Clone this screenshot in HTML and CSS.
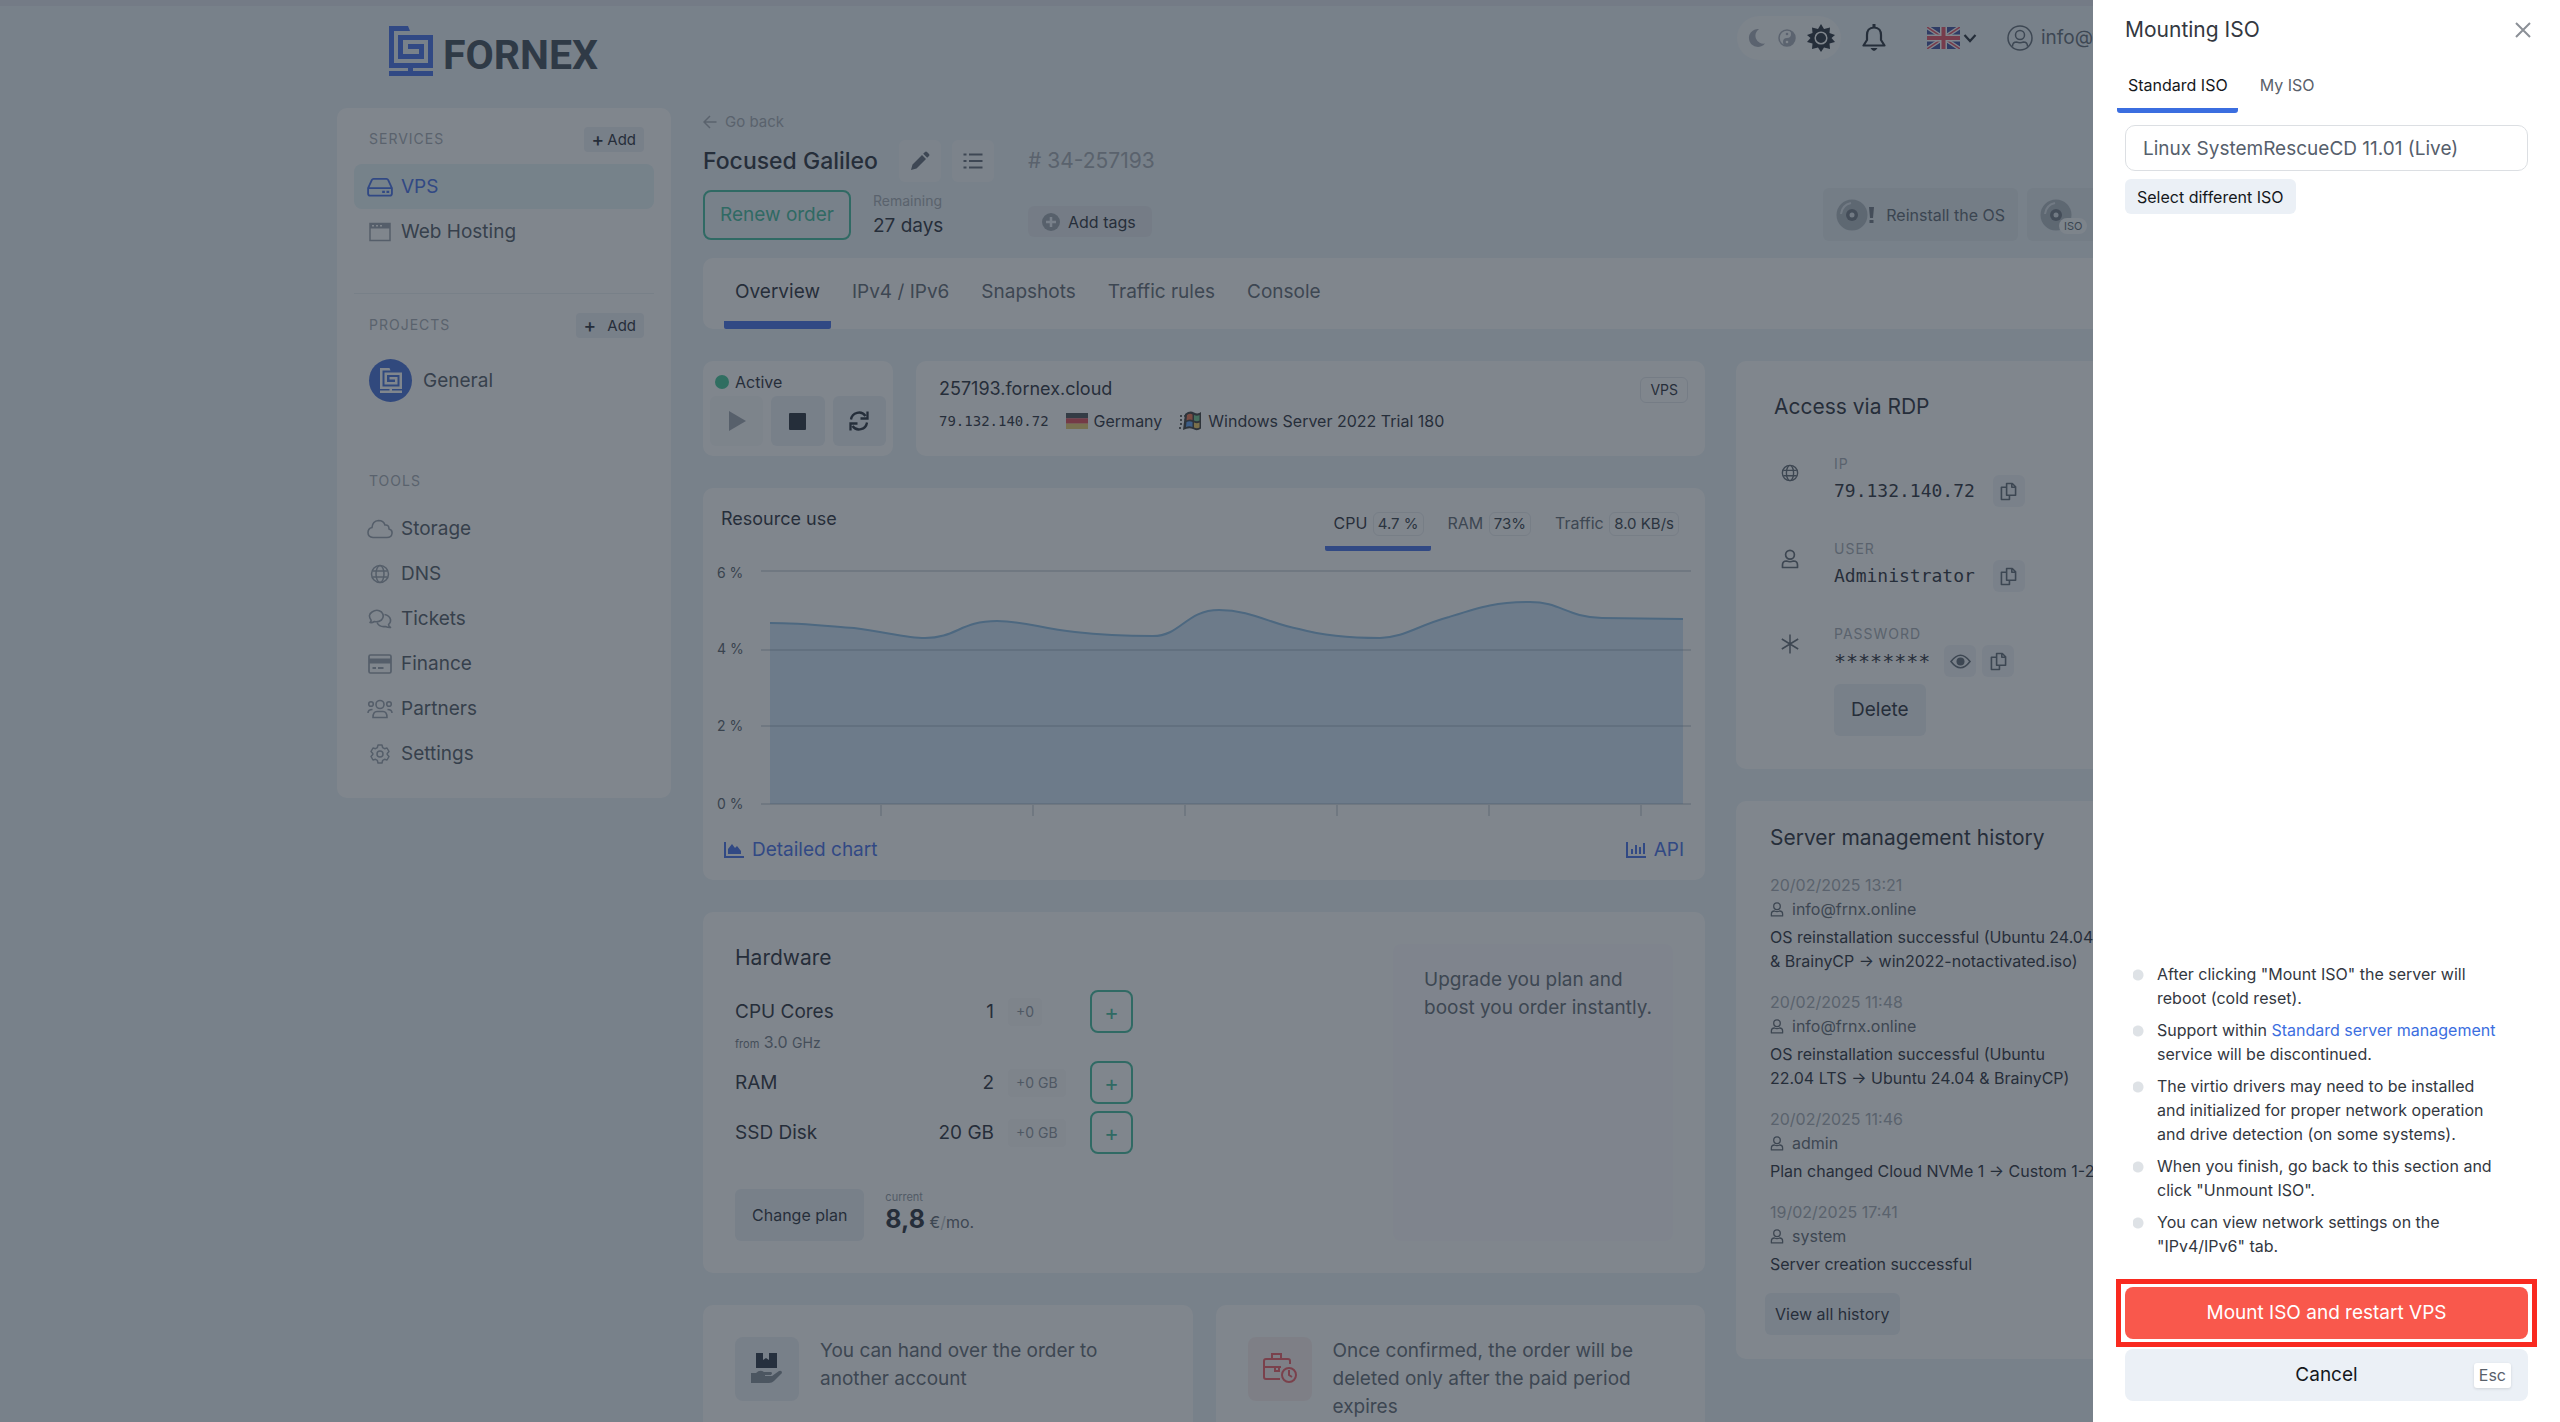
FILE: index.html
```
<!DOCTYPE html>
<html lang="en">
<head>
	<meta charset="UTF-8">
	<meta name="viewport" content="width=device-width, initial-scale=1.0">
	<title>Focused Galileo - FORNEX</title>
	<link rel="stylesheet" href="styles.css">
</head>
<body>
	<!-- icons used more than once -->
	<svg class="sprite" aria-hidden="true">
		<symbol id="i-mark" viewBox="0 0 44 50">
			<path fill="currentColor" fill-rule="evenodd" d="M0 0H19L21 5H5V37H39V14H14V28H30V23H19V18H35V33H9V9H44V42H24V45H44V50H0V45H19V42H0Z"/>
		</symbol>
		<symbol id="i-globe" viewBox="0 0 20 20">
			<g fill="none" stroke="currentColor" stroke-width="1.5"><circle cx="10" cy="10" r="8.5"/><ellipse cx="10" cy="10" rx="4" ry="8.5"/><path d="M2.500 7H17.500M2.500 13H17.500"/></g>
		</symbol>
		<symbol id="i-user" viewBox="0 0 18 20">
			<g fill="none" stroke="currentColor" stroke-width="1.700"><circle cx="9" cy="5.700" r="4.400"/><path d="M1.500 18.500v-2.500q0-4 4-4q3.500 1.500 7 0q4 0 4 4v2.500z" stroke-linejoin="round"/></g>
		</symbol>
		<symbol id="i-copy" viewBox="0 0 18 20">
			<path fill="none" stroke="currentColor" stroke-width="1.700" stroke-linejoin="round" d="M7 1.500h6l3.500 3.500v9H7zM12.500 1.500V5.500h4M7 5.500H1.500v13h8.500V14"/>
		</symbol>
	</svg>

	<div class="topline"></div>
	<div class="page">
		<header class="header">
			<a class="logo" href="#"><svg class="logo-mark"><use href="#i-mark"/></svg><span>FORNEX</span></a>
			<div class="header-tools">
				<div class="theme">
					<button class="icon-btn" aria-label="Dark theme"><svg width="20" height="20" viewBox="0 0 20 20"><path fill="currentColor" d="M12 1A9 9 0 1 0 18 15.500A8 8 0 0 1 12 1Z"/></svg></button>
					<button class="icon-btn" aria-label="Auto theme"><svg width="20" height="20" viewBox="0 0 20 20"><circle cx="10" cy="10" r="8" fill="none" stroke="currentColor" stroke-width="1.500"/><path fill="currentColor" d="M10 2A8 8 0 0 1 10 18A4 4 0 0 1 10 10A4 4 0 0 0 10 2Z"/><circle cx="10" cy="14" r="1.300" fill="#fff"/><circle cx="10" cy="6" r="1.300" fill="currentColor"/></svg></button>
					<button class="icon-btn theme-on" aria-label="Light theme"><svg width="28" height="28" viewBox="0 0 28 28"><path fill="currentColor" d="M14 0L17 5L23 3.500L22.500 9L28 11L24.500 14L28 18L22.500 19.500L23 25L17 23.500L14 28L11 23.500L5 25L5.500 19.500L0 18L3.500 14L0 11L5.500 9L5 3.500L11 5Z"/><circle cx="14" cy="14" r="5.800" fill="none" stroke="#fff" stroke-width="1.500"/></svg></button>
				</div>
				<button class="icon-btn bell" aria-label="Notifications"><svg width="24" height="28" viewBox="0 0 24 28"><path fill="none" stroke="currentColor" stroke-width="2.200" stroke-linejoin="round" d="M12 3.500C7 3.500 5 7 5 11V16L1.500 21.500H22.500L19 16V11C19 7 17 3.500 12 3.500Z"/><path fill="currentColor" d="M10.500 0h3v4h-3zM8.500 24h7q-3.500 6-7 0z"/></svg></button>
				<button class="icon-btn lang" aria-label="Language">
					<svg width="33" height="22" viewBox="0 0 33 22"><path fill="#35489c" d="M0 0H33V22H0Z"/><path stroke="#fff" stroke-width="4" d="M0 0L33 22M33 0L0 22"/><path stroke="#e8485c" stroke-width="1.500" d="M0 0L33 22M33 0L0 22"/><path stroke="#fff" stroke-width="7" d="M16.500 0V22M0 11H33"/><path stroke="#e8485c" stroke-width="4" d="M16.500 0V22M0 11H33"/></svg>
					<svg width="14" height="10" viewBox="0 0 14 10"><path fill="none" stroke="currentColor" stroke-width="2.200" d="M1.500 2L7 8L12.500 2"/></svg>
				</button>
				<a class="account" href="#"><svg width="26" height="26" viewBox="0 0 26 26"><g fill="none" stroke="currentColor" stroke-width="1.500"><circle cx="13" cy="13" r="12"/><circle cx="13" cy="10" r="4.500"/><path d="M5.500 21.500q0-4.500 4-4.500q3.500 1.500 7 0q4 0 4 4.500"/></g></svg>info@f</a>
			</div>
		</header>

		<div class="layout">
			<nav class="sidebar card">
				<div class="side-head"><h3>SERVICES</h3><button class="btn-add"><b>+</b>Add</button></div>
				<a class="side-link active" href="#"><svg viewBox="0 0 24 18"><path fill="none" stroke="currentColor" stroke-width="1.700" stroke-linejoin="round" d="M1 10L4.500 2.500Q5 1.500 6 1.500H18Q19 1.500 19.500 2.500L23 10V15Q23 17 21 17H3Q1 17 1 15ZM1 10H23"/><path fill="currentColor" d="M14 12.500h2.500v2H14zM18 12.500h2.500v2H18z"/></svg>VPS</a>
				<a class="side-link" href="#"><svg viewBox="0 0 24 20"><path fill="none" stroke="currentColor" stroke-width="1.500" d="M2 1.500H22V18.500H2Z"/><path fill="currentColor" d="M2 1H22V6.500H2Z"/><path stroke="#fff" stroke-width="1.500" d="M4 3.700h2M8 3.700h2M12 3.700h2"/></svg>Web Hosting</a>
				<hr>
				<div class="side-head"><h3>PROJECTS</h3><button class="btn-add wide"><b>+</b>Add</button></div>
				<a class="side-link project" href="#"><span class="avatar"><svg><use href="#i-mark"/></svg></span>General</a>
				<div class="side-head tools"><h3>TOOLS</h3></div>
				<a class="side-link" href="#"><svg viewBox="0 0 26 20"><path fill="none" stroke="currentColor" stroke-width="1.600" d="M6 18.500Q1 18 1 13.500Q1 9.500 5 8.500Q5.500 2 11.500 1.500Q16.500 1.500 18 6Q22 5.500 22 10Q25.500 11 25 14.500Q24.500 18.500 20 18.500Z"/></svg>Storage</a>
				<a class="side-link" href="#"><svg><use href="#i-globe"/></svg>DNS</a>
				<a class="side-link" href="#"><svg viewBox="0 0 24 20"><g fill="none" stroke="currentColor" stroke-width="1.600" stroke-linejoin="round"><path d="M2 13.500Q3.500 12 3 11Q-.5 6 4 3Q9-.5 13.500 3Q17 7 13.500 11Q10 13.500 6.500 12.500Q4 14 2 13.500Z"/><path d="M16.500 5.500Q21.500 6.500 22.500 10.500Q23 13.500 20.500 15.500Q20.500 17 22.500 18.500Q20 18.700 17.500 17.500Q11.500 18.500 9 13.500"/></g></svg>Tickets</a>
				<a class="side-link" href="#"><svg viewBox="0 0 24 20"><rect x="1" y="1" width="22" height="18" rx="1.500" fill="none" stroke="currentColor" stroke-width="1.700"/><path fill="currentColor" d="M1 4.500H23V9.500H1zM4.500 13h3.500v2H4.500zM10 13h5.500v2H10z"/></svg>Finance</a>
				<a class="side-link" href="#"><svg viewBox="0 0 26 20"><g fill="none" stroke="currentColor" stroke-width="1.600"><circle cx="13" cy="5.500" r="4"/><circle cx="4" cy="5" r="2.300"/><circle cx="22" cy="5" r="2.300"/><path d="M6 18.500Q6 12.500 10 12.500H16Q20 12.500 20 18.500ZM1 14Q1 10.500 5.500 10.500M25 14Q25 10.500 20.500 10.500"/></g></svg>Partners</a>
				<a class="side-link" href="#"><svg viewBox="0 0 20 20"><g fill="none" stroke="currentColor" stroke-width="1.500" stroke-linejoin="round"><circle cx="10" cy="10" r="3"/><path d="M8 1H12L12.700 3.700L14.500 4.700L17 4L19 7.500L17.200 9.500V10.500L19 12.500L17 16L14.500 15.300L12.700 16.300L12 19H8L7.300 16.300L5.500 15.300L3 16L1 12.500L2.800 10.500V9.500L1 7.500L3 4L5.500 4.700L7.300 3.700Z"/></g></svg>Settings</a>
			</nav>

			<main class="main">
				<a class="back" href="#"><svg width="14" height="14" viewBox="0 0 14 14"><path fill="none" stroke="currentColor" stroke-width="1.500" d="M13.500 7H1.500M7 1L1 7L7 13"/></svg>Go back</a>
				<div class="order">
					<div class="order-name">
						<h1>Focused Galileo</h1>
						<button class="tool" aria-label="Rename"><svg width="20" height="20" viewBox="0 0 20 20"><path fill="currentColor" d="M1 19L2.500 13.500L12 4L16 8L6.500 17.500ZM13.200 2.800L15 1Q16 0 17 1L19 3Q20 4 19 5L17.200 6.800Z"/></svg></button>
						<button class="tool" aria-label="Details"><svg width="20" height="18" viewBox="0 0 20 18"><path stroke="currentColor" stroke-width="2.200" d="M6 2.500H19.500M6 9H19.500M6 15.500H19.500M.5 2.500H3.500M.5 9H3.500M.5 15.500H3.500"/></svg></button>
					</div>
					<div class="order-id"># 34-257193</div>
					<div class="order-term">
						<button class="btn-renew">Renew order</button>
						<div><div class="remaining">Remaining</div><div class="days">27 days</div></div>
					</div>
					<button class="btn-tags"><svg width="18" height="18" viewBox="0 0 18 18"><circle cx="9" cy="9" r="9" fill="#9aa1ab"/><path stroke="#ebf0f7" stroke-width="2.500" d="M9 4V14M4 9H14"/></svg>Add tags</button>
					<div class="order-actions">
						<button><svg width="38" height="32" viewBox="0 0 38 32"><circle cx="16" cy="16" r="15.500" fill="#aab3bc"/><path fill="none" stroke="#dbe2e8" stroke-width="2" d="M5 15Q6 6 15 4"/><circle cx="16" cy="16" r="6" fill="#69727e"/><circle cx="16" cy="16" r="2.500" fill="#dbe2e8"/><path fill="#69727e" d="M33 8h5l-1 11h-3zM33.500 21h4v3h-4z"/></svg>Reinstall the OS</button>
						<button class="act-iso"><span class="disc"><svg width="32" height="32" viewBox="0 0 32 32"><circle cx="16" cy="16" r="15.500" fill="#aab3bc"/><path fill="none" stroke="#dbe2e8" stroke-width="2" d="M5 15Q6 6 15 4"/><circle cx="16" cy="16" r="6" fill="#69727e"/><circle cx="16" cy="16" r="2.500" fill="#dbe2e8"/></svg><small>ISO</small></span></button>
					</div>
				</div>

				<nav class="tabs card">
					<a class="active" href="#">Overview</a>
					<a href="#">IPv4 / IPv6</a>
					<a href="#">Snapshots</a>
					<a href="#">Traffic rules</a>
					<a href="#">Console</a>
				</nav>

				<div class="columns">
					<div class="col">
						<div class="row-info">
							<section class="status card">
								<div class="status-text"><i class="dot"></i>Active</div>
								<div class="power">
									<button class="off" aria-label="Start"><svg width="18" height="20" viewBox="0 0 18 20"><path fill="currentColor" d="M1 0L18 10L1 20Z"/></svg></button>
									<button aria-label="Stop"><svg width="17" height="17" viewBox="0 0 17 17"><rect width="17" height="17" rx="1" fill="currentColor"/></svg></button>
									<button aria-label="Restart"><svg width="20" height="20" viewBox="0 0 20 20"><path fill="none" stroke="currentColor" stroke-width="2.300" d="M2 8.500A8 8 0 0 1 16.500 5M18 11.500A8 8 0 0 1 3.500 15M18.500 .5V7.500H11.500M1.500 19.500V12.500H8.500"/></svg></button>
								</div>
							</section>
							<section class="server card">
								<div>
									<h2>257193.fornex.cloud</h2>
									<div class="server-meta">
										<span class="mono">79.132.140.72</span>
										<span><svg width="22" height="16" viewBox="0 0 22 16"><path fill="#42464d" d="M0 0H22V5.400H0z"/><path fill="#e0414f" d="M0 5.300H22V10.700H0z"/><path fill="#e9c766" d="M0 10.600H22V16H0z"/></svg>Germany</span>
										<span><svg width="23" height="20" viewBox="0 0 23 20"><path fill="#333" d="M6 3Q11-1 15 1.500Q19 3.500 22 1V17.500Q18 20.500 14 18Q10 16 4 19Z"/><path fill="#ea6b45" d="M8 4Q11 2 13.500 3.500V9Q10.500 8 7.500 9.500z"/><path fill="#69c28a" d="M15 4Q18 5.500 20.500 4V9.500Q18 11 15 9.500z"/><path fill="#579bf0" d="M7.500 11Q10.500 9.500 13.500 11V16Q10 14.500 7 16z"/><path fill="#efc75a" d="M15 11.500Q18 13 20.500 11.500V16.500Q18 18 15 16.500z"/><path stroke="#555" stroke-width="2" stroke-dasharray="2 2" d="M1 5H6M1 9H6M1 13H5M0 17H4"/></svg>Windows Server 2022 Trial 180</span>
									</div>
								</div>
								<span class="type">VPS</span>
							</section>
						</div>

						<section class="usage card">
							<div class="usage-head">
								<h2>Resource use</h2>
								<div class="usage-tabs">
									<a class="active" href="#">CPU <span>4.7 %</span></a>
									<a href="#">RAM <span>73%</span></a>
									<a href="#">Traffic <span>8.0 KB/s</span></a>
								</div>
							</div>
							<svg class="chart" viewBox="0 0 976 262">
								<path class="area" d="M54 67C82 67 100 69 138 72C170 76 190 82 209 82C240 82 245 65 281 65C310 65 325 73 359 76C385 79 410 80 437 80C465 80 470 54 503 54C535 54 555 68 583 73C605 79 630 82 664 82C690 81 700 70 733 61C765 51 780 46 814 46C845 46 850 61 886 62L967 63V248H54Z"/>
								<path class="grid" d="M45 15H975M45 94H975M45 170H975M45 248H975M165 248V260M317 248V260M469 248V260M621 248V260M773 248V260M925 248V260"/>
								<path class="line" d="M54 67C82 67 100 69 138 72C170 76 190 82 209 82C240 82 245 65 281 65C310 65 325 73 359 76C385 79 410 80 437 80C465 80 470 54 503 54C535 54 555 68 583 73C605 79 630 82 664 82C690 81 700 70 733 61C765 51 780 46 814 46C845 46 850 61 886 62L967 63"/>
								<text x="1" y="22">6 %</text><text x="1" y="98">4 %</text><text x="1" y="175">2 %</text><text x="1" y="253">0 %</text>
							</svg>
							<div class="usage-links">
								<a href="#"><svg width="20" height="16" viewBox="0 0 20 16"><path fill="currentColor" d="M0 0H2V14H20V16H0ZM4 12V7L8 2L11 6L13 4L17 9V12Z"/></svg>Detailed chart</a>
								<a href="#"><svg width="20" height="16" viewBox="0 0 20 16"><path fill="currentColor" d="M0 0H2V14H20V16H0ZM5 7H7V12H5ZM9 3H11V12H9ZM13 5H15V12H13ZM17 1H19V12H17Z"/></svg>API</a>
							</div>
						</section>

						<section class="hardware card">
							<div class="hw-main">
								<h2>Hardware</h2>
								<div class="hw-row"><span>CPU Cores</span><span class="val">1</span><span class="plus"><i>+0</i></span><button aria-label="Add CPU cores">+</button></div>
								<div class="hw-note"><small>from</small> 3.0 <em>GHz</em></div>
								<div class="hw-row"><span>RAM</span><span class="val">2</span><span class="plus"><i>+0 GB</i></span><button aria-label="Add RAM">+</button></div>
								<div class="hw-row"><span>SSD Disk</span><span class="val">20 GB</span><span class="plus"><i>+0 GB</i></span><button aria-label="Add disk space">+</button></div>
								<div class="hw-foot">
									<button class="btn-gray">Change plan</button>
									<div class="cost"><small>current</small><div><b>8,8</b> €<s>/</s>mo.</div></div>
								</div>
							</div>
							<div class="upgrade">Upgrade you plan and boost you order instantly.</div>
						</section>

						<div class="row-cards">
							<section class="tip card">
								<span class="tip-icon"><svg width="32" height="32" viewBox="0 0 32 32"><path fill="#1f2a3a" d="M5 0H12V7L15 5L18 7V0H26V15H5Z"/><path fill="#7e8792" d="M0 20H5Q9 16 13 19H20Q22 20 20 22H14V23H21L28 18Q31 17 31 20L23 28Q21 30 18 30H0Z"/></svg></span>
								<p>You can hand over the order to another account</p>
							</section>
							<section class="tip card">
								<span class="tip-icon red"><svg width="34" height="32" viewBox="0 0 34 32"><g fill="none" stroke="currentColor" stroke-width="2"><path d="M17 26H3Q1 26 1 24V8Q1 6 3 6H25Q27 6 27 8V11M9 6V1H18V6M1 14H18M12 14V18H16V14"/><circle cx="26" cy="22" r="7"/><path d="M26 17V22L29 24"/></g></svg></span>
								<p>Once confirmed, the order will be deleted only after the paid period expires</p>
							</section>
						</div>
					</div>

					<div class="col">
						<section class="access card">
							<h2>Access via RDP</h2>
							<div class="cred">
								<svg width="18" height="18"><use href="#i-globe"/></svg>
								<div><h4>IP</h4><div class="cred-val"><span class="mono">79.132.140.72</span><button aria-label="Copy IP"><svg width="17" height="19"><use href="#i-copy"/></svg></button></div></div>
							</div>
							<div class="cred">
								<svg width="18" height="20"><use href="#i-user"/></svg>
								<div><h4>USER</h4><div class="cred-val"><span class="mono">Administrator</span><button aria-label="Copy user"><svg width="17" height="19"><use href="#i-copy"/></svg></button></div></div>
							</div>
							<div class="cred">
								<svg width="18" height="20" viewBox="0 0 18 20"><path stroke="currentColor" stroke-width="1.500" d="M9 .5V19.500M.8 5L17.200 15M17.200 5L.8 15"/></svg>
								<div><h4>PASSWORD</h4><div class="cred-val pass"><span class="mono">********</span><button aria-label="Show password"><svg width="21" height="15" viewBox="0 0 21 15"><path fill="none" stroke="currentColor" stroke-width="1.600" d="M1 7.500Q10.500-5 20 7.500Q10.500 20 1 7.500Z"/><circle cx="10.500" cy="7.500" r="4" fill="currentColor"/></svg></button><button aria-label="Copy password"><svg width="17" height="19"><use href="#i-copy"/></svg></button></div>
								<button class="btn-gray del">Delete</button></div>
							</div>
						</section>

						<section class="history card">
							<h2>Server management history</h2>
							<article><time>20/02/2025 13:21</time><div class="who"><svg width="14" height="15"><use href="#i-user"/></svg>info@frnx.online</div><p>OS reinstallation successful (Ubuntu 24.04<br>&amp; BrainyCP → win2022-notactivated.iso)</p></article>
							<article><time>20/02/2025 11:48</time><div class="who"><svg width="14" height="15"><use href="#i-user"/></svg>info@frnx.online</div><p>OS reinstallation successful (Ubuntu<br>22.04 LTS → Ubuntu 24.04 &amp; BrainyCP)</p></article>
							<article><time>20/02/2025 11:46</time><div class="who"><svg width="14" height="15"><use href="#i-user"/></svg>admin</div><p>Plan changed Cloud NVMe 1 → Custom 1-2</p></article>
							<article><time>19/02/2025 17:41</time><div class="who"><svg width="14" height="15"><use href="#i-user"/></svg>system</div><p>Server creation successful</p></article>
							<button class="btn-gray view-all">View all history</button>
						</section>
					</div>
				</div>
			</main>
		</div>
	</div>

	<div class="backdrop"></div>

	<aside class="drawer">
		<div class="drawer-head"><h2>Mounting ISO</h2><button class="close" aria-label="Close"><svg width="16" height="16" viewBox="0 0 16 16"><path stroke="currentColor" stroke-width="2" d="M1 1L15 15M15 1L1 15"/></svg></button></div>
		<nav class="drawer-tabs"><a class="active" href="#">Standard ISO</a><a href="#">My ISO</a></nav>
		<input class="iso" type="text" aria-label="Selected ISO" value="Linux SystemRescueCD 11.01 (Live)" readonly>
		<button class="btn-gray pick">Select different ISO</button>
		<ul class="notes">
			<li>After clicking "Mount ISO" the server will reboot (cold reset).</li>
			<li>Support within <a href="#">Standard server management</a> service will be discontinued.</li>
			<li>The virtio drivers may need to be installed and initialized for proper network operation and drive detection (on some systems).</li>
			<li>When you finish, go back to this section and click "Unmount ISO".</li>
			<li>You can view network settings on the "IPv4/IPv6" tab.</li>
		</ul>
		<div class="highlight"><button class="btn-mount">Mount ISO and restart VPS</button></div>
		<button class="btn-cancel"><span>Cancel</span><kbd>Esc</kbd></button>
	</aside>
</body>
</html>
```
FILE: styles.css
```
*{
	box-sizing:border-box;
}

body{
	margin:0;
	height:100vh;
	overflow:hidden;
	background:#ebf2f7;
	color:#1c2430;
	font-family:Inter,"Liberation Sans",sans-serif;
	font-size:19px;
	line-height:28px;
}

h1,h2,h3,h4,p,ul{
	margin:0;
	padding:0;
	font-weight:400;
}

a{
	color:inherit;
	text-decoration:none;
}

button{
	padding:0;
	border:none;
	background:none;
	color:inherit;
	font:inherit;
	cursor:pointer;
}

svg{
	flex:none;
}

.sprite{
	display:none;
}

.mono{
	font-family:"DejaVu Sans Mono",monospace;
}

.card{
	background:#fff;
	border-radius:10px;
}

.icon-btn{
	display:flex;
	align-items:center;
}

.btn-gray{
	background:#ebf0f6;
	border-radius:6px;
}

/* header */
.topline{
	height:6px;
	background:#e0e3ee;
}

.page{
	max-width:1886px;
	margin:0 auto;
}

.header{
	display:flex;
	justify-content:space-between;
	align-items:flex-start;
	height:102px;
	padding:10px 0 0 52px;
}

.logo{
	display:flex;
	align-items:flex-start;
	gap:10px;
	margin-top:10px;
	color:#35434f;
	font-family:Roboto,sans-serif;
	font-size:41px;
	font-weight:700;
	line-height:50px;
}

.logo span{
	padding-top:4px;
}

.logo-mark{
	width:44px;
	height:50px;
	color:#3b66e8;
}

.header-tools{
	display:flex;
	align-items:center;
}

.theme{
	display:flex;
	align-items:center;
	gap:10px;
	height:44px;
	padding:0 6px 0 10px;
	border-radius:22px;
	background:#f7f9fb;
	color:#a3a8b3;
}

.theme-on{
	color:#1c2430;
}

.bell{
	margin-left:21px;
}

.lang{
	gap:3px;
	margin-left:41px;
}

.account{
	display:flex;
	align-items:center;
	gap:8px;
	width:216px;
	margin-left:30px;
	color:#59636f;
}

/* layout */
.layout{
	display:grid;
	grid-template-columns:334px minmax(0,1fr);
	gap:32px;
	align-items:start;
}

.sidebar{
	padding:12px 17px 22px;
}

.side-head{
	display:flex;
	justify-content:space-between;
	align-items:center;
	height:38px;
	padding:0 10px 0 15px;
}

.side-head h3{
	color:#a0a6ae;
	font-size:14px;
	letter-spacing:1px;
}

.btn-add{
	display:flex;
	align-items:center;
	gap:3px;
	padding:0 8px;
	border-radius:4px;
	background:#ebf0f6;
	font-size:15px;
	line-height:25px;
}

.btn-add b{
	font-size:19px;
	font-weight:500;
}

.btn-add.wide{
	gap:11px;
}

.side-link{
	display:flex;
	align-items:center;
	gap:8px;
	height:45px;
	padding:0 13px;
	border-radius:8px;
	color:#49525e;
}

.side-link > svg{
	width:26px;
	height:20px;
	color:#949ca7;
}

.side-link.active{
	margin-top:6px;
	background:#e5f4f8;
	color:#3b66e8;
}

.side-link.active > svg{
	color:inherit;
}

.sidebar hr{
	height:1px;
	margin:39px 0 12px;
	border:none;
	background:#eceff3;
}

.side-link.project{
	gap:11px;
	margin-top:14px;
	padding-left:15px;
}

.avatar{
	display:flex;
	align-items:center;
	justify-content:center;
	width:43px;
	height:43px;
	border-radius:50%;
	background:#3b66d8;
	color:#fff;
}

.avatar svg{
	width:22px;
	height:25px;
}

.side-head.tools{
	margin:59px 0 6px;
}

/* order head */
.main{
	padding-top:4px;
}

.back{
	display:flex;
	align-items:center;
	gap:8px;
	color:#a0a6ae;
	font-size:15px;
	line-height:20px;
}

.order{
	display:grid;
	grid-template-columns:325px auto 1fr;
	row-gap:6px;
	align-items:center;
	margin:8px 0 17px;
}

.order-name{
	display:flex;
	align-items:center;
	gap:11px;
	height:42px;
}

.order-name h1{
	margin-right:10px;
	font-size:23px;
	font-weight:500;
}

.tool{
	display:flex;
	align-items:center;
	justify-content:center;
	width:42px;
	height:42px;
	border-radius:6px;
	background:#f5f8fa;
	color:#5a6270;
}

.order-id{
	grid-column:2 / 4;
	color:#a0a6ae;
	font-size:21px;
}

.order-term{
	display:flex;
	gap:22px;
	height:50px;
}

.btn-renew{
	padding:0 15px;
	border:2px solid #38b998;
	border-radius:8px;
	color:#38b998;
}

.remaining{
	color:#a0a6ae;
	font-size:14px;
	line-height:22px;
}

.btn-tags{
	display:flex;
	align-items:center;
	align-self:end;
	gap:8px;
	height:31px;
	margin-bottom:4px;
	padding:0 16px 0 14px;
	border-radius:6px;
	background:#e3e7ee;
	font-size:16px;
}

.order-actions{
	display:flex;
	justify-content:flex-end;
	gap:9px;
}

.order-actions button{
	display:flex;
	align-items:center;
	gap:12px;
	height:53px;
	padding:0 13px;
	border-radius:6px;
	background:#e0e8ed;
	color:#545d69;
	font-size:16px;
}

.order-actions .act-iso{
	width:196px;
}

.disc{
	position:relative;
	display:flex;
}

.disc small{
	position:absolute;
	left:19px;
	top:19px;
	padding:0 5px;
	border-radius:8px;
	background:#f7f9fb;
	font-size:11px;
	line-height:16px;
}

/* tabs */
.tabs{
	display:flex;
	gap:10px;
	height:71px;
	padding:0 21px;
}

.tabs a{
	padding:20px 11px 0;
	color:#59616c;
}

.tabs a.active{
	border-bottom:8px solid #3b66e8;
	border-radius:2px;
	color:#1c2430;
}

.columns{
	display:grid;
	grid-template-columns:minmax(0,1fr) 487px;
	gap:31px;
	margin-top:32px;
}

.col{
	display:flex;
	flex-direction:column;
	gap:32px;
}

.row-info{
	display:grid;
	grid-template-columns:190px 1fr;
	gap:23px;
}

.status{
	height:95px;
	padding:7px 7px 0;
}

.status-text{
	display:flex;
	align-items:center;
	gap:6px;
	padding-left:5px;
	font-size:16px;
}

.dot{
	width:14px;
	height:14px;
	border-radius:50%;
	background:#38c392;
}

.power{
	display:flex;
	gap:8px;
}

.power button{
	display:flex;
	flex:1;
	align-items:center;
	justify-content:center;
	height:50px;
	border-radius:6px;
	background:#ebf0f6;
}

.power .off{
	background:#f8f9fb;
	color:#9aa1ab;
}

.server{
	display:flex;
	justify-content:space-between;
	align-items:flex-start;
	padding:14px 17px 0 23px;
}

.server h2{
	font-size:18px;
}

.server-meta{
	display:flex;
	gap:17px;
	margin-top:4px;
	font-size:16px;
}

.server-meta span{
	display:flex;
	align-items:center;
	gap:6px;
}

.server-meta .mono{
	font-size:14px;
}

.type{
	margin-top:2px;
	padding:0 9px;
	border:1px solid #e3e7ec;
	border-radius:6px;
	font-size:14px;
	line-height:24px;
}

/* resource use */
.usage{
	height:392px;
	padding:17px 13px 0;
}

.usage h2{
	font-size:18px;
}

.usage-head{
	display:flex;
	justify-content:space-between;
	padding-left:5px;
}

.usage-tabs{
	display:flex;
	gap:9px;
	margin-right:6px;
	color:#59616c;
	font-size:16px;
}

.usage-tabs a{
	height:46px;
	padding:4px 7px 0 8px;
}

.usage-tabs a.active{
	border-bottom:5px solid #3b66e8;
	border-radius:2px;
	color:#1c2430;
}

.usage-tabs span{
	display:inline-block;
	margin-left:1px;
	padding:0 4px;
	border:1px solid #e8eaee;
	border-radius:6px;
	color:#2b323d;
	font-size:15px;
	line-height:22px;
}

.chart{
	display:block;
	width:100%;
	margin-top:5px;
}

.chart text{
	fill:#4f5763;
	font-size:14px;
}

.area{
	fill:#cfe3f7;
}

.line{
	fill:none;
	stroke:#7fb4df;
	stroke-width:2;
}

.grid{
	fill:none;
	stroke:rgba(100,115,140,.25);
	stroke-width:2;
}

.usage-links{
	display:flex;
	justify-content:space-between;
	padding:18px 8px 0;
	color:#3b66e8;
}

.usage-links a{
	display:flex;
	align-items:center;
	gap:8px;
}

/* hardware */
.hardware{
	display:flex;
	justify-content:space-between;
	height:361px;
	padding:32px;
}

.hw-main{
	width:398px;
}

.hardware h2{
	font-size:21px;
}

.hw-row{
	display:grid;
	grid-template-columns:110px 149px 1fr 43px;
	align-items:center;
	margin-bottom:7px;
}

.hardware h2 + .hw-row{
	margin:18px 0 0;
}

.hw-row .val{
	text-align:right;
}

.hw-row button{
	height:43px;
	border:2px solid #38b998;
	border-radius:8px;
	color:#38b998;
	font-size:22px;
}

.hw-row .plus{
	padding-left:14px;
}

.plus i{
	display:inline-block;
	padding:0 8px;
	border-radius:4px;
	background:#fafafb;
	color:#858c97;
	font-size:14px;
	font-style:normal;
}

.hw-note{
	height:28px;
	margin-top:-5px;
	margin-bottom:5px;
	color:#6b737e;
	font-size:16px;
}

.hw-note small{
	font-size:11px;
}

.hw-note em{
	font-size:14px;
	font-style:normal;
}

.hw-foot{
	display:flex;
	gap:21px;
	margin-top:35px;
}

.hw-foot .btn-gray{
	height:52px;
	padding:0 17px;
	font-size:16px;
}

.cost{
	color:#59616c;
	font-size:16px;
}

.cost small{
	display:block;
	color:#8c939d;
	font-size:11px;
	line-height:16px;
}

.cost b{
	color:#1c2430;
	font-size:25px;
}

.cost s{
	color:#b6bbc2;
	text-decoration:none;
}

.upgrade{
	width:280px;
	padding:22px 16px 22px 31px;
	border-radius:8px;
	background:#fcfbfe;
	color:#59616c;
}

.row-cards{
	display:grid;
	grid-template-columns:1fr 1fr;
	gap:23px;
}

.tip{
	display:flex;
	gap:21px;
	min-height:170px;
	padding:32px;
	color:#59616c;
}

.tip-icon{
	display:flex;
	flex:none;
	align-items:center;
	justify-content:center;
	width:64px;
	height:64px;
	border-radius:8px;
	background:#ebf0f6;
}

.tip-icon.red{
	background:#fbeeee;
	color:#f0545c;
}

/* right column */
.access{
	height:408px;
	padding:32px 38px;
}

.access h2,.history h2{
	font-size:21px;
}

.cred{
	display:grid;
	grid-template-columns:60px 1fr;
	height:85px;
	color:#59616c;
}

.access h2 + .cred{
	margin-top:32px;
}

.cred > svg{
	margin:11px 0 0 7px;
}

.cred h4{
	color:#a0a6ae;
	font-size:14px;
	letter-spacing:1px;
	line-height:22px;
}

.cred-val{
	display:flex;
	align-items:center;
	gap:18px;
	height:32px;
	color:#1c2430;
	font-size:18px;
}

.cred-val button{
	display:flex;
	align-items:center;
	justify-content:center;
	width:32px;
	height:32px;
	border-radius:6px;
	background:#f0f3f7;
	color:#59636f;
}

.pass{
	gap:6px;
}

.pass .mono{
	margin-right:8px;
	font-size:20px;
}

.btn-gray.del{
	height:52px;
	margin-top:7px;
	padding:0 17px;
	color:#1c2430;
}

.history{
	height:558px;
	padding:23px 34px;
	font-size:16px;
	line-height:24px;
}

.history h2{
	margin-bottom:21px;
	line-height:28px;
}

.history article{
	margin-bottom:17px;
}

.history time{
	display:block;
	color:#a0a6ae;
}

.history p{
	margin-top:4px;
	white-space:nowrap;
}

.who{
	display:flex;
	align-items:center;
	gap:8px;
	color:#59616c;
}

.view-all{
	height:42px;
	margin:0 0 0 -5px;
	padding:0 10px;
}

/* drawer */
.backdrop{
	position:fixed;
	inset:0;
	background:rgba(43,53,65,.6);
}

.drawer{
	position:fixed;
	top:0;
	right:0;
	bottom:0;
	display:flex;
	flex-direction:column;
	align-items:flex-start;
	width:467px;
	padding:0 32px 21px;
	background:#fff;
	color:#33383f;
	font-size:16px;
	line-height:24px;
}

.drawer-head{
	display:flex;
	justify-content:space-between;
	align-items:center;
	align-self:stretch;
	height:60px;
	margin-right:-3px;
}

.drawer-head h2{
	font-size:21px;
}

.close{
	display:flex;
	color:#8b9097;
}

.drawer-tabs{
	display:flex;
	gap:11px;
	margin-left:-8px;
	color:#5a616b;
}

.drawer-tabs a{
	height:53px;
	padding:13px 10px 0 11px;
}

.drawer-tabs a.active{
	border-bottom:5px solid #3b6ee0;
	border-radius:3px;
	color:#15181c;
}

.iso{
	width:100%;
	height:46px;
	margin:12px 0 8px;
	padding:0 17px;
	border:1px solid #dcdfe3;
	border-radius:10px;
	color:#56606c;
	font:19px Inter,sans-serif;
}

.pick{
	height:35px;
	padding:0 12px;
	color:#15181c;
}

.notes{
	display:flex;
	flex-direction:column;
	gap:8px;
	margin-top:auto;
	padding:0 26px 0 8px;
	list-style:none;
}

.notes li{
	padding-left:24px;
	background:radial-gradient(circle at 5px 13px,#dee2e6 5px,transparent 6px) no-repeat;
}

.notes a{
	color:#3b6ee0;
}

.highlight{
	align-self:stretch;
	margin:21px -9px 2px;
	padding:3px 4px;
	border:5px solid #f92a20;
}

.btn-mount{
	display:block;
	width:100%;
	height:52px;
	border-radius:8px;
	background:#f9584c;
	color:#fff;
	font-size:19px;
}

.btn-cancel{
	display:grid;
	grid-template-columns:1fr auto 1fr;
	align-items:center;
	width:100%;
	height:52px;
	padding:0 17px;
	border-radius:8px;
	background:#ebf0f6;
	color:#15181c;
	font-size:19px;
}

.btn-cancel span{
	grid-column:2;
}

.btn-cancel kbd{
	justify-self:end;
	padding:0 5px;
	border-radius:3px;
	background:#fff;
	box-shadow:0 1px 3px rgba(0,0,0,.12);
	color:#5a616b;
	font:16px/25px Inter,sans-serif;
}
```
